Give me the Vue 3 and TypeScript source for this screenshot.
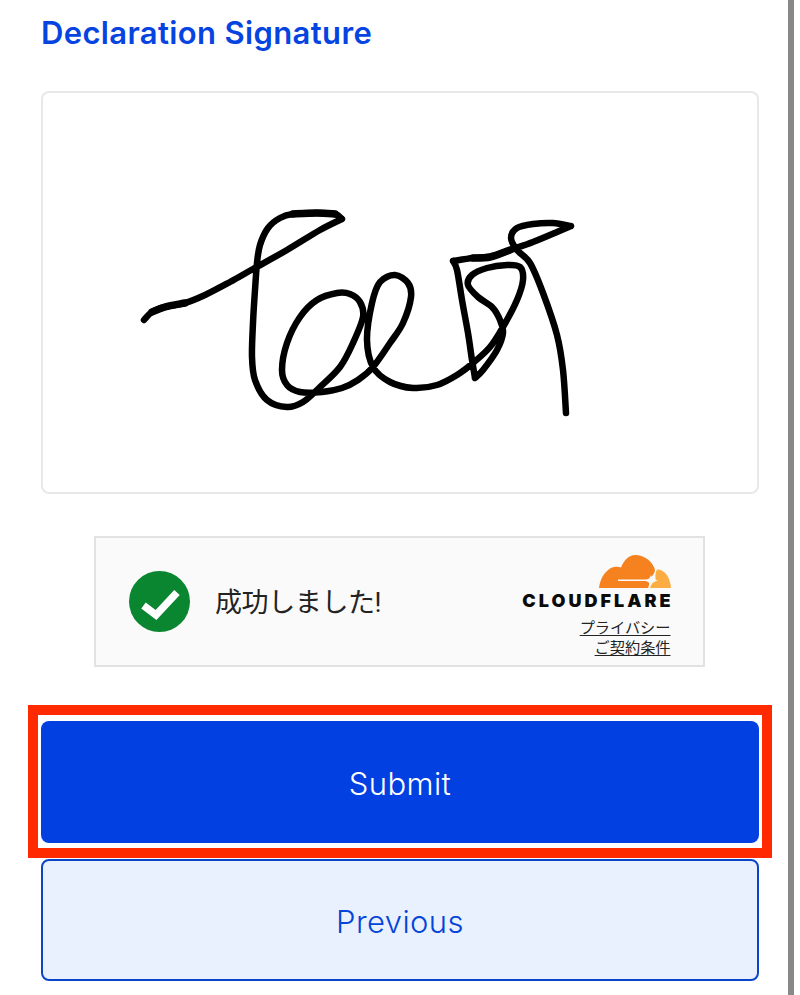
<script setup lang="ts">
type Pt = [number, number];

const segments: Pt[][] = [
  [[144,320],[152,312],[165,307],[185,303],[205,295],[230,282],[253,269],[287,250],[320,230],[342,219]],
  [[342,219],[335,214],[317,213],[293,214],[280,218],[268,228],[260,245],[257,263],[255,290],[253,323],[252,357],
   [255,380],[267,400],[287,407],[303,402],[320,387],[340,367],[353,343],[363,317],[360,302],[350,294],[337,293],
   [317,300],[300,317],[287,343],[282,370],[287,385],[300,392],[322,392],[342,388],[358,380],[373,367],[390,343],
   [403,323],[411,297],[408,283],[395,275],[380,282],[372,303],[367,340],[373,367],[390,382],[413,388],[437,385],
   [457,375],[473,363],[490,347],[503,327],[517,300],[523,280],[520,267],[507,265],[487,268],[472,275],[468,285],
   [478,297],[492,307],[500,320],[503,333],[497,350],[483,370],[475,378]],
  [[475,378],[472,360],[468,333],[462,300],[457,270],[453,261]],
  [[453,261],[473,258],[490,257],[510,250],[533,242],[557,232],[571,226]],
  [[571,226],[553,223],[533,224],[517,228],[511,238],[517,250],[530,263],[543,293],[557,335],[563,370],[566,413]],
];

function smooth(points: Pt[]): string {
  let d = `M${points[0][0]} ${points[0][1]}`;
  for (let i = 0; i < points.length - 1; i++) {
    const p0 = points[Math.max(i - 1, 0)];
    const p1 = points[i];
    const p2 = points[i + 1];
    const p3 = points[Math.min(i + 2, points.length - 1)];
    const c1x = p1[0] + (p2[0] - p0[0]) / 6;
    const c1y = p1[1] + (p2[1] - p0[1]) / 6;
    const c2x = p2[0] - (p3[0] - p1[0]) / 6;
    const c2y = p2[1] - (p3[1] - p1[1]) / 6;
    d += ` C${c1x.toFixed(1)} ${c1y.toFixed(1)} ${c2x.toFixed(1)} ${c2y.toFixed(1)} ${p2[0]} ${p2[1]}`;
  }
  return d;
}

const signaturePath = segments.map(smooth).join(" ");
const heavyPath = [
  segments[0].slice(1, 4),
  segments[1].slice(1, 4),
  segments[3].slice(1, 4),
]
  .map(smooth)
  .join(" ");
</script>

<template>
  <div class="page">
    <main class="form">
      <h2 class="title">Declaration Signature</h2>

      <div class="pad">
        <svg class="signature" viewBox="41 91 718 403" aria-label="Signature">
          <g fill="none" stroke="#000" stroke-linecap="round" stroke-linejoin="round">
            <path :d="signaturePath" stroke-width="6.5" />
            <path :d="heavyPath" stroke-width="7.5" />
          </g>
        </svg>
      </div>

      <div class="turnstile">
        <div class="status">
          <svg class="check" viewBox="0 0 61 61">
            <circle cx="30.5" cy="30.5" r="30.5" fill="#0a8530" />
            <path d="M14.5 34.5 L27 44 L48 21.5" fill="none" stroke="#fff" stroke-width="7.5" />
          </svg>
          <span class="status-text">成功しました!</span>
        </div>
        <div class="brand">
          <svg class="cloud" viewBox="0 0 72 33">
            <path fill="#f6821f" d="M0 33 C0.8 27 3 19 11 13.5 C14 11.5 19 11 22 12.5 C25 5 30 0 36 0 C46 0 54 7 56 15 C56 18 53 21 51 24.5 L19 24.5 L19 26 L51 26 C50 29 50 31 49 33 Z" />
            <path fill="#fbad41" d="M58 14.5 C65 14 71.5 22 72 33 L51 33 C52 31 52 29 53 27 L57 26 C56 22 56 18 58 14.5 Z" />
            <path fill="#fafafa" d="M52 20 Q53 24.5 59 25.5 Q53 26.5 52 31 Q51 26.5 45 25.5 Q51 24.5 52 20 Z" />
          </svg>
          <span class="wordmark">CLOUDFLARE</span>
          <a class="legal first">プライバシー</a>
          <a class="legal">ご契約条件</a>
        </div>
      </div>

      <button class="btn primary" type="button">
        Submit
        <span class="highlight"></span>
      </button>
      <button class="btn secondary" type="button">Previous</button>
    </main>
    <div class="scrollbar"></div>
  </div>
</template>

<style scoped>
.page {
  position: relative;
  width: 800px;
  height: 995px;
  overflow: hidden;
  background: #fff;
}
.form {
  width: 718px;
  margin-left: 41px;
  display: flex;
  flex-direction: column;
  font-family: Inter, Lato, sans-serif;
}
.title {
  margin: 0;
  height: 91px;
  padding-top: 13px;
  box-sizing: border-box;
  font-size: 31px;
  line-height: 40px;
  font-weight: 600;
  letter-spacing: 0.36px;
  color: #0544e0;
}
.pad {
  height: 403px;
  box-sizing: border-box;
  border: 2px solid #e8e8e8;
  border-radius: 8px;
  overflow: hidden;
  background: #fff;
}
.signature {
  display: block;
  width: 718px;
  height: 403px;
  margin: -2px;
}
.turnstile {
  width: 611px;
  height: 131px;
  margin: 42px 0 0 53px;
  box-sizing: border-box;
  border: 2px solid #e2e2e2;
  background: #fafafa;
  display: flex;
  justify-content: space-between;
  align-items: flex-start;
  padding: 0 32.5px 0 33px;
}
.status {
  display: flex;
  align-items: center;
  gap: 25px;
  margin-top: 33px;
}
.check {
  width: 61px;
  height: 61px;
  flex: none;
}
.status-text {
  padding-bottom: 2px;
  font-family: Roboto, "Noto Sans CJK JP", sans-serif;
  font-size: 27px;
  letter-spacing: -0.4px;
  color: #232323;
}
.brand {
  display: flex;
  flex-direction: column;
  align-items: flex-end;
  margin-top: 17px;
}
.cloud {
  width: 72px;
  height: 33px;
  display: block;
}
.wordmark {
  margin-top: 3px;
  margin-right: -3px;
  font-family: Inter, sans-serif;
  font-weight: 900;
  font-size: 18px;
  line-height: 20px;
  letter-spacing: 3px;
  color: #0b0b0b;
}
.legal {
  font-family: "Noto Sans CJK JP", sans-serif;
  font-size: 15.2px;
  line-height: 20px;
  color: #232323;
  text-decoration: underline;
  text-underline-offset: 2px;
}
.legal.first {
  margin-top: 5px;
}
.btn {
  position: relative;
  display: block;
  width: 718px;
  height: 122px;
  box-sizing: border-box;
  padding-top: 3px;
  border-radius: 8px;
  font-family: Inter, Lato, sans-serif;
  font-weight: 300;
  font-size: 31px;
  letter-spacing: 0.4px;
  cursor: pointer;
}
.primary {
  margin-top: 54px;
  border: none;
  background: #0340e2;
  color: #fff;
}
.secondary {
  margin-top: 16px;
  border: 2px solid #0a45c8;
  background: #e8f1fd;
  color: #0544d8;
}
.highlight {
  position: absolute;
  top: -16px;
  right: -13px;
  bottom: -15px;
  left: -13px;
  border: 10px solid #ff2a00;
  pointer-events: none;
}
.scrollbar {
  position: absolute;
  top: 0;
  bottom: 0;
  left: 788px;
  width: 6px;
  background: #888;
}
</style>
